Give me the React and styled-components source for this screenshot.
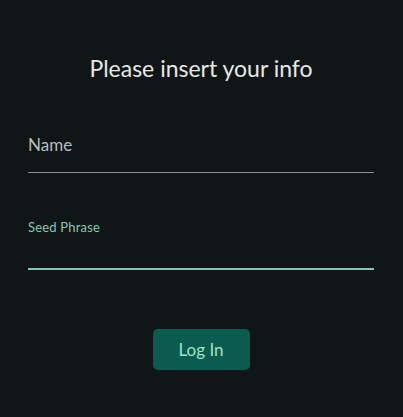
import React, { useState } from 'react';
import styled, { createGlobalStyle } from 'styled-components';

const GlobalStyle = createGlobalStyle`
  html, body {
    margin: 0;
    padding: 0;
    background: #101615;
  }
  body {
    font-family: Lato, "Open Sans", sans-serif;
  }
`;

const Page = styled.div`
  min-height: 417px;
  box-sizing: border-box;
  padding: 52px 29px 0 28px;
  display: flex;
  flex-direction: column;
`;

const Title = styled.h1`
  margin: 0;
  font-size: 23px;
  font-weight: 400;
  line-height: 32px;
  color: #e6e8e7;
  text-align: center;
`;

const Form = styled.form`
  margin-top: 38px;
  display: flex;
  flex-direction: column;
  gap: 45px;
`;

const Field = styled.label`
  display: flex;
  flex-direction: column;
  justify-content: ${p => (p.$focused ? 'flex-start' : 'flex-end')};
  height: 50px;
  border-bottom: ${p => (p.$focused ? '2px solid #7fc9b4' : '1px solid #8a8f8d')};
`;

const Label = styled.span`
  font-size: ${p => (p.$focused ? '13px' : '17px')};
  line-height: ${p => (p.$focused ? '16px' : '22px')};
  letter-spacing: ${p => (p.$focused ? '0.2px' : '0')};
  color: ${p => (p.$focused ? '#7fc9b4' : '#b9bebc')};
  padding-bottom: ${p => (p.$focused ? '0' : '16px')};
  padding-top: ${p => (p.$focused ? '1px' : '0')};
`;

const Input = styled.input`
  display: none;
`;

const Actions = styled.div`
  margin-top: 59px;
  display: flex;
  justify-content: center;
`;

const Button = styled.button`
  width: 97px;
  height: 41px;
  border: none;
  border-radius: 5px;
  background: #0b5c4f;
  color: #9ee3cd;
  font-family: Lato, "Open Sans", sans-serif;
  font-size: 17px;
  cursor: pointer;
`;

export default function App() {
  const [name, setName] = useState('');
  const [seed, setSeed] = useState('');

  return (
    <>
      <GlobalStyle />
      <Page>
        <Title>Please insert your info</Title>
        <Form onSubmit={e => e.preventDefault()}>
          <Field>
            <Label>Name</Label>
            <Input value={name} onChange={e => setName(e.target.value)} />
          </Field>
          <Field $focused>
            <Label $focused>Seed Phrase</Label>
            <Input value={seed} onChange={e => setSeed(e.target.value)} />
          </Field>
        </Form>
        <Actions>
          <Button type="submit">Log In</Button>
        </Actions>
      </Page>
    </>
  );
}
